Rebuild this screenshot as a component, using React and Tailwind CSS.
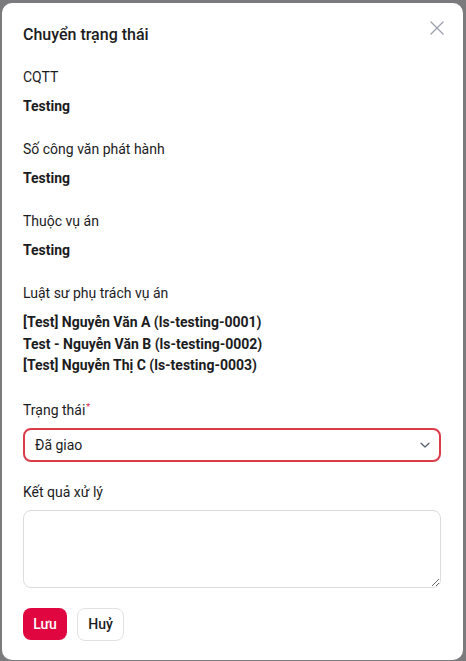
import React from 'react';

const nguoiPhuTrach = [
  '[Test] Nguyễn Văn A (ls-testing-0001)',
  'Test - Nguyễn Văn B (ls-testing-0002)',
  '[Test] Nguyễn Thị C (ls-testing-0003)',
];

function Truong({ nhan, children }) {
  return (
    <div>
      <p className="text-sm leading-5">{nhan}</p>
      <div className="mt-[9px]">{children}</div>
    </div>
  );
}

export default function App() {
  return (
    <div
      className="min-h-screen bg-[#7b7b7d] pt-[3px] pl-[2px] pr-[3px] pb-[3px] text-[#1c1c1e]"
      style={{ fontFamily: 'Roboto, "Noto Sans", sans-serif' }}
    >
      <div className="relative bg-white rounded-[10px] pl-[21px] pr-[22px] pt-5 pb-[19px]">
        <button className="absolute right-[15px] top-[14px] p-1 text-[#9aa0ab]">
          <svg width="14" height="14" viewBox="0 0 14 14" fill="none" stroke="currentColor" strokeWidth="1.3" strokeLinecap="round">
            <path d="M1 1 13 13M13 1 1 13" />
          </svg>
        </button>

        <h2 className="text-base leading-6 font-medium">Chuyển trạng thái</h2>

        <div className="mt-5 flex flex-col gap-[23px]">
          <Truong nhan="CQTT">
            <p className="text-sm leading-5 font-bold">Testing</p>
          </Truong>
          <Truong nhan="Số công văn phát hành">
            <p className="text-sm leading-5 font-bold">Testing</p>
          </Truong>
          <Truong nhan="Thuộc vụ án">
            <p className="text-sm leading-5 font-bold">Testing</p>
          </Truong>
          <Truong nhan="Luật sư phụ trách vụ án">
            {nguoiPhuTrach.map(ten => (
              <p key={ten} className="text-sm leading-[21.5px] font-bold">{ten}</p>
            ))}
          </Truong>

          <div>
            <p className="text-sm leading-5">
              Trạng thái<sup className="text-[#e11d48] text-[9px] ml-px">*</sup>
            </p>
            <div className="mt-2 h-[34px] flex items-center justify-between border-2 border-[#dc3b4a] rounded-lg pl-[10px] pr-[8px]">
              <span className="text-sm">Đã giao</span>
              <svg width="12" height="12" viewBox="0 0 12 12" fill="none" stroke="#5b6270" strokeWidth="1.3" strokeLinecap="round" strokeLinejoin="round">
                <path d="M2 4.2 6 8l4-3.8" />
              </svg>
            </div>
          </div>
        </div>

        <div className="mt-5">
          <p className="text-sm leading-5">Kết quả xử lý</p>
          <textarea className="mt-2 block w-full h-[78px] border border-[#dcdcdc] rounded-lg px-3 py-2 text-sm resize-y outline-none" />
        </div>

        <div className="mt-5 flex gap-[10px]">
          <button className="h-[32px] w-[44px] rounded-lg bg-[#e0063f] text-white text-sm font-medium">Lưu</button>
          <button className="h-[33px] w-[47px] rounded-lg border border-[#e2e2e2] bg-white text-sm font-medium">Huỷ</button>
        </div>
      </div>
    </div>
  );
}
